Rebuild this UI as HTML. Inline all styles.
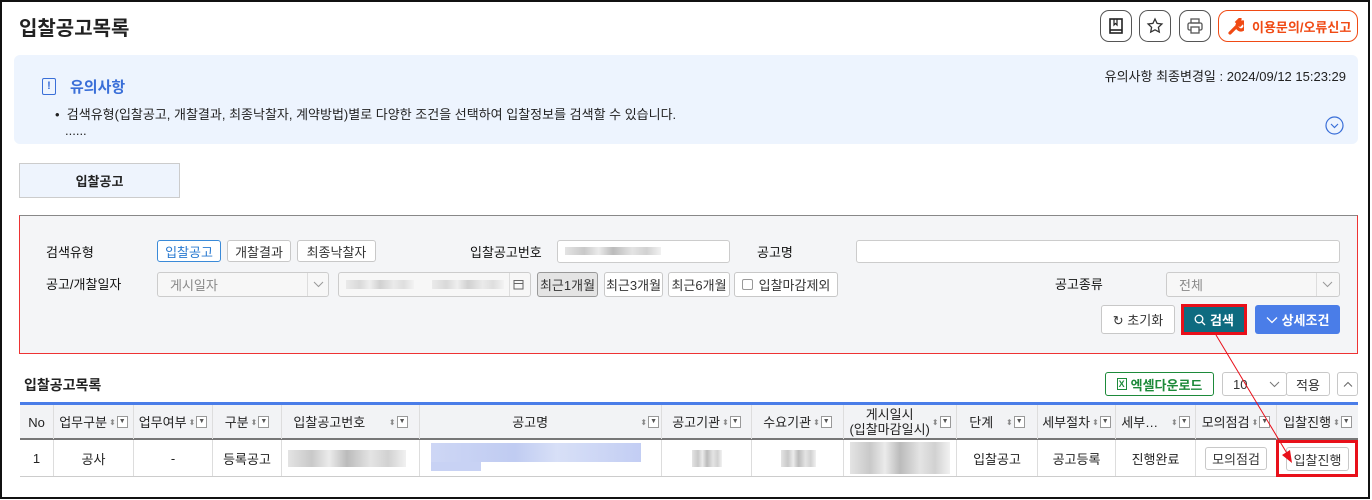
<!DOCTYPE html>
<html><head><meta charset="utf-8"><style>
*{box-sizing:border-box;margin:0;padding:0}
body{width:1372px;height:500px;overflow:hidden;background:#fff;font-family:"Liberation Sans","Noto Sans CJK KR",sans-serif;color:#222;position:relative}
.a{position:absolute}
.frame{left:0;top:0;width:1370px;height:499px;border:2px solid #111}
.btn{position:absolute;border:1px solid #c8c8c8;background:#fff;border-radius:3px;font-size:13px;display:flex;align-items:center;justify-content:center;color:#333}
.lbl{position:absolute;font-size:13px;color:#111}
.inp{position:absolute;border:1px solid #ccc;background:#fff;border-radius:3px}
.dis{background:#f7f7f7;color:#888;font-size:13px;padding-left:12px;display:flex;align-items:center}
.blur{position:absolute;background:linear-gradient(90deg,#ddd,#bbb 20%,#e6e6e6 35%,#aaa 50%,#ddd 70%,#c6c6c6 85%,#eee);opacity:.8}
.hc{position:absolute;top:405px;height:34px;display:flex;align-items:center;justify-content:center;font-size:13px;border-right:1px solid #ddd;text-align:center;line-height:15px}
.rc{position:absolute;top:440px;height:36px;display:flex;align-items:center;justify-content:center;font-size:13px;border-right:1px solid #ddd}
.srt{font-size:8px;color:#888;margin-left:2px}
.fl{display:inline-block;width:11px;height:12px;border:1px solid #999;font-size:7px;line-height:10px;color:#555;margin-left:1px;background:#fff}
</style></head><body>
<div class="a frame"></div>
<div class="a" style="left:19px;top:12px;font-size:20px;font-weight:bold">입찰공고목록</div>
<div class="a" style="left:1100px;top:10px;width:32px;height:32px;border:1px solid #555;border-radius:9px"></div>
<svg class="a" style="left:1107px;top:17px" width="18" height="18" viewBox="0 0 18 18"><rect x="3" y="2" width="12" height="14" fill="none" stroke="#222" stroke-width="1.6"/><line x1="3" y1="13" x2="15" y2="13" stroke="#222" stroke-width="1.6"/><path d="M7 2v6l1.5-1.5L10 8V2" fill="none" stroke="#222" stroke-width="1.2"/></svg>
<div class="a" style="left:1139px;top:10px;width:32px;height:32px;border:1px solid #555;border-radius:9px"></div>
<svg class="a" style="left:1146px;top:17px" width="18" height="18" viewBox="0 0 18 18"><path d="M9 2l2.1 4.4 4.8.6-3.5 3.3.9 4.8L9 12.8 4.7 15.1l.9-4.8L2.1 7l4.8-.6z" fill="none" stroke="#333" stroke-width="1.3"/></svg>
<div class="a" style="left:1179px;top:10px;width:32px;height:32px;border:1px solid #555;border-radius:9px"></div>
<svg class="a" style="left:1186px;top:17px" width="18" height="18" viewBox="0 0 18 18"><rect x="5" y="2" width="8" height="4" fill="none" stroke="#555" stroke-width="1.3"/><rect x="2" y="6" width="14" height="7" rx="1.5" fill="none" stroke="#555" stroke-width="1.3"/><rect x="5" y="10" width="8" height="6" fill="#fff" stroke="#555" stroke-width="1.3"/></svg>
<div class="a" style="left:1218px;top:10px;width:140px;height:32px;border:1.5px solid #f04a14;border-radius:10px;color:#f04a14;font-size:13px;font-weight:bold;display:flex;align-items:center;padding-left:33px">이용문의/오류신고</div>
<svg class="a" style="left:1227px;top:18px" width="17" height="17" viewBox="0 0 17 17"><path d="M3 15l7-7M10 8a4 4 0 1 0 0-0.1M13 1l-3 3 3 3 3-3" stroke="#f04a14" stroke-width="3.2" fill="none" stroke-linecap="round"/></svg>
<div class="a" style="left:14px;top:55px;width:1344px;height:89px;background:#edf4fe;border-radius:6px"></div>
<div class="a" style="left:42px;top:78px;width:14px;height:17px;border:1.6px solid #3a6fd8;border-radius:2px;color:#3a6fd8;font-size:11px;font-weight:bold;text-align:center;line-height:14px">!</div>
<div class="a" style="left:70px;top:76px;font-size:15px;color:#3a6fd8;font-weight:bold">유의사항</div>
<div class="a" style="left:55px;top:104px;font-size:13px">•&nbsp; 검색유형(입찰공고, 개찰결과, 최종낙찰자, 계약방법)별로 다양한 조건을 선택하여 입찰정보를 검색할 수 있습니다.</div>
<div class="a" style="left:65px;top:123px;font-size:13px">......</div>
<div class="a" style="right:26px;top:66px;font-size:13px">유의사항 최종변경일 : 2024/09/12 15:23:29</div>
<svg class="a" style="left:1325px;top:116px" width="19" height="19" viewBox="0 0 19 19"><circle cx="9.5" cy="9.5" r="8.5" fill="none" stroke="#3a6fd8" stroke-width="1.2"/><path d="M6 8l3.5 3.5L13 8" fill="none" stroke="#3a6fd8" stroke-width="1.2"/></svg>
<div class="a" style="left:19px;top:163px;width:161px;height:35px;background:#eef4fd;border:1px solid #ccc;font-size:13px;font-weight:bold;display:flex;align-items:center;justify-content:center">입찰공고</div>
<div class="a" style="left:19px;top:215px;width:1339px;height:139px;background:#f4f5f7;border:1px solid #e33;border-top-color:#888"></div>
<div class="lbl" style="left:46px;top:242px">검색유형</div>
<div class="btn" style="left:157px;top:240px;width:64px;height:22px;border-color:#3a8ad8;color:#2a7ad0">입찰공고</div>
<div class="btn" style="left:227px;top:240px;width:64px;height:22px">개찰결과</div>
<div class="btn" style="left:297px;top:240px;width:79px;height:22px">최종낙찰자</div>
<div class="lbl" style="left:470px;top:242px">입찰공고번호</div>
<div class="inp" style="left:557px;top:240px;width:173px;height:23px"></div>
<div class="blur" style="left:565px;top:247px;width:96px;height:8px"></div>
<div class="lbl" style="left:757px;top:242px">공고명</div>
<div class="inp" style="left:856px;top:240px;width:484px;height:23px"></div>
<div class="lbl" style="left:46px;top:274px">공고/개찰일자</div>
<div class="inp dis" style="left:157px;top:272px;width:172px;height:25px">게시일자</div>
<div class="a" style="left:307px;top:273px;width:1px;height:23px;background:#ddd"></div>
<svg class="a" style="left:313px;top:280px" width="11" height="8" viewBox="0 0 11 8"><path d="M1 2l4.5 4.5L10 2" fill="none" stroke="#999"/></svg>
<div class="inp dis" style="left:338px;top:272px;width:193px;height:25px"></div>
<div class="blur" style="left:346px;top:280px;width:68px;height:9px;opacity:.5"></div>
<div class="blur" style="left:432px;top:280px;width:72px;height:9px;opacity:.5"></div>
<div class="a" style="left:509px;top:273px;width:1px;height:23px;background:#ddd"></div>
<svg class="a" style="left:513px;top:279px" width="11" height="11" viewBox="0 0 11 11"><rect x="1" y="1.5" width="9" height="8.5" fill="none" stroke="#666"/><line x1="1" y1="4.5" x2="10" y2="4.5" stroke="#666"/></svg>
<div class="btn" style="left:537px;top:272px;width:61px;height:25px;background:#e4e4e4;border-color:#999">최근1개월</div>
<div class="btn" style="left:604px;top:272px;width:59px;height:25px">최근3개월</div>
<div class="btn" style="left:668px;top:272px;width:62px;height:25px">최근6개월</div>
<div class="btn" style="left:734px;top:272px;width:104px;height:25px"><span style="display:inline-block;width:11px;height:11px;border:1px solid #999;border-radius:2px;margin-right:6px"></span>입찰마감제외</div>
<div class="lbl" style="left:1055px;top:274px">공고종류</div>
<div class="inp dis" style="left:1166px;top:272px;width:174px;height:25px">전체</div>
<div class="a" style="left:1316px;top:273px;width:1px;height:23px;background:#ddd"></div>
<svg class="a" style="left:1322px;top:280px" width="11" height="8" viewBox="0 0 11 8"><path d="M1 2l4.5 4.5L10 2" fill="none" stroke="#999"/></svg>
<div class="btn" style="left:1101px;top:305px;width:74px;height:29px;font-size:13px">↻&nbsp;초기화</div>
<div class="a" style="left:1181px;top:304px;width:66px;height:31px;border:3px solid #e8101a;background:#0e6b80;color:#fff;font-size:13px;font-weight:bold;display:flex;align-items:center;justify-content:center"><svg width="12" height="12" viewBox="0 0 12 12" style="margin-right:4px"><circle cx="5" cy="5" r="3.8" fill="none" stroke="#fff" stroke-width="1.3"/><path d="M8 8l3 3" stroke="#fff" stroke-width="1.3"/></svg>검색</div>
<div class="a" style="left:1255px;top:305px;width:85px;height:29px;background:#4a7de8;border-radius:3px;color:#fff;font-size:13px;font-weight:bold;display:flex;align-items:center;justify-content:center"><svg width="12" height="8" viewBox="0 0 12 8" style="margin-right:4px"><path d="M1 1.5l5 5 5-5" fill="none" stroke="#fff" stroke-width="1.3"/></svg>상세조건</div>
<div class="a" style="left:24px;top:375px;font-size:14px;font-weight:bold">입찰공고목록</div>
<div class="a" style="left:1105px;top:372px;width:109px;height:24px;border:1px solid #1d8a3a;border-radius:3px;color:#1d8a3a;font-size:13px;font-weight:bold;display:flex;align-items:center;justify-content:center"><span style="border:1px solid #1d8a3a;font-size:9px;padding:0 1px;margin-right:4px">X</span>엑셀다운로드</div>
<div class="btn" style="left:1222px;top:372px;width:65px;height:24px;justify-content:flex-start;padding-left:10px">10<svg width="11" height="8" viewBox="0 0 11 8" style="margin-left:22px"><path d="M1 2l4.5 4.5L10 2" fill="none" stroke="#777"/></svg></div>
<div class="btn" style="left:1286px;top:372px;width:44px;height:24px">적용</div>
<div class="btn" style="left:1337px;top:372px;width:21px;height:24px"><svg width="10" height="7" viewBox="0 0 10 7"><path d="M1 5.5l4-4 4 4" fill="none" stroke="#666"/></svg></div>
<div class="a" style="left:20px;top:402px;width:1338px;height:3px;background:#4a7de8"></div>
<div class="a" style="left:20px;top:405px;width:1338px;height:34px;background:#f2f3f5"></div>
<div class="a" style="left:20px;top:438px;width:1338px;height:2px;background:#777"></div>
<div class="a" style="left:20px;top:476px;width:1338px;height:1px;background:#ccc"></div>
<div class="hc" style="left:20px;width:34px">No</div>
<div class="hc" style="left:54px;width:80px">업무구분<span class="srt">⬍</span><span class="fl">▼</span></div>
<div class="hc" style="left:134px;width:79px">업무여부<span class="srt">⬍</span><span class="fl">▼</span></div>
<div class="hc" style="left:213px;width:69px">구분 <span class="srt">⬍</span><span class="fl">▼</span></div>
<div class="hc" style="left:282px;width:138px">입찰공고번호&nbsp;&nbsp;&nbsp;&nbsp;&nbsp;&nbsp;<span class="srt">⬍</span><span class="fl">▼</span></div>
<div class="hc" style="left:420px;width:242px">&nbsp;&nbsp;&nbsp;&nbsp;&nbsp;&nbsp;&nbsp;&nbsp;&nbsp;&nbsp;&nbsp;&nbsp;&nbsp;&nbsp;&nbsp;&nbsp;&nbsp;&nbsp;&nbsp;&nbsp;&nbsp;&nbsp;&nbsp;&nbsp;&nbsp;공고명&nbsp;&nbsp;&nbsp;&nbsp;&nbsp;&nbsp;&nbsp;&nbsp;&nbsp;&nbsp;&nbsp;&nbsp;&nbsp;&nbsp;&nbsp;&nbsp;&nbsp;&nbsp;&nbsp;&nbsp;&nbsp;&nbsp;&nbsp;&nbsp;&nbsp;<span class="srt">⬍</span><span class="fl">▼</span></div>
<div class="hc" style="left:662px;width:90px">공고기관 <span class="srt">⬍</span><span class="fl">▼</span></div>
<div class="hc" style="left:752px;width:92px">수요기관 <span class="srt">⬍</span><span class="fl">▼</span></div>
<div class="hc" style="left:844px;width:113px"><span>게시일시<br>(입찰마감일시)</span><span class="srt">⬍</span><span class="fl">▼</span></div>
<div class="hc" style="left:957px;width:81px">단계&nbsp;&nbsp;&nbsp;<span class="srt">⬍</span><span class="fl">▼</span></div>
<div class="hc" style="left:1038px;width:78px">세부절차<span class="srt">⬍</span><span class="fl">▼</span></div>
<div class="hc" style="left:1116px;width:80px">세부…&nbsp;&nbsp;&nbsp;<span class="srt">⬍</span><span class="fl">▼</span></div>
<div class="hc" style="left:1196px;width:81px">모의점검<span class="srt">⬍</span><span class="fl">▼</span></div>
<div class="hc" style="left:1277px;width:81px;border-right:none">입찰진행<span class="srt">⬍</span><span class="fl">▼</span></div>
<div class="rc" style="left:20px;width:34px">1</div>
<div class="rc" style="left:54px;width:80px">공사</div>
<div class="rc" style="left:134px;width:79px">-</div>
<div class="rc" style="left:213px;width:69px">등록공고</div>
<div class="rc" style="left:282px;width:138px"></div>
<div class="blur" style="left:288px;top:450px;width:118px;height:17px"></div>
<div class="rc" style="left:420px;width:242px"></div>
<div class="a" style="left:431px;top:443px;width:210px;height:19px;background:linear-gradient(90deg,#c8d2f4,#b9c6f0 40%,#d3dcf6 60%,#bcc8f2);opacity:.9"></div>
<div class="a" style="left:431px;top:462px;width:50px;height:9px;background:#c8d2f4"></div>
<div class="rc" style="left:662px;width:90px"></div>
<div class="blur" style="left:692px;top:450px;width:30px;height:17px"></div>
<div class="rc" style="left:752px;width:92px"></div>
<div class="blur" style="left:781px;top:450px;width:35px;height:17px"></div>
<div class="rc" style="left:844px;width:113px"></div>
<div class="blur" style="left:850px;top:442px;width:100px;height:32px"></div>
<div class="rc" style="left:957px;width:81px">입찰공고</div>
<div class="rc" style="left:1038px;width:78px">공고등록</div>
<div class="rc" style="left:1116px;width:80px">진행완료</div>
<div class="rc" style="left:1196px;width:81px"><span class="btn" style="position:static;width:62px;height:23px">모의점검</span></div>
<div class="rc" style="left:1277px;width:81px;border-right:none"></div>
<div class="a" style="left:1276px;top:440px;width:82px;height:37px;border:3px solid #e8101a"></div>
<div class="btn" style="left:1286px;top:447px;width:63px;height:24px">입찰진행</div>
<svg class="a" style="left:0;top:0" width="1372" height="500"><line x1="1216" y1="335" x2="1288" y2="455" stroke="#e8101a" stroke-width="1"/><path d="M1292 463l-10-8 8-5z" fill="#e8101a"/></svg>
</body></html>
